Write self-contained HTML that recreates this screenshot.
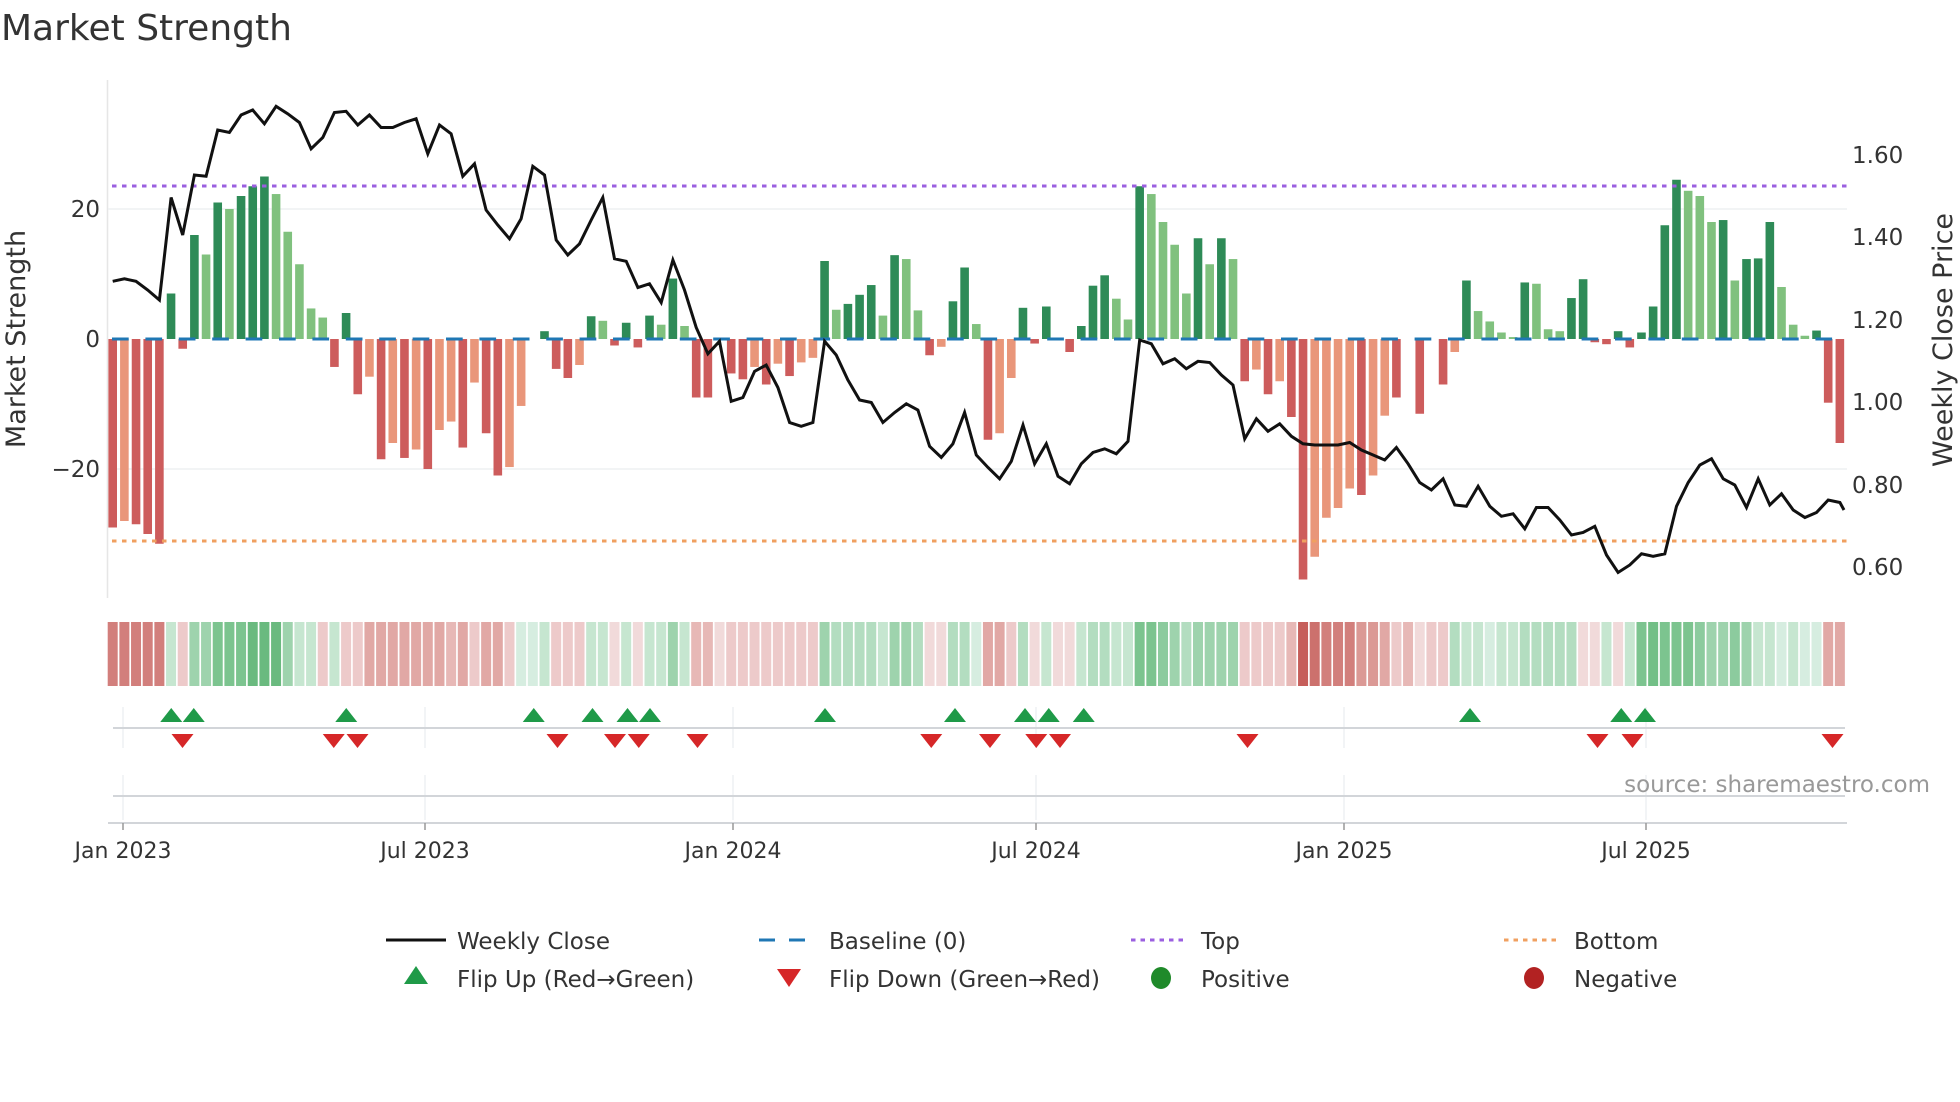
<!DOCTYPE html>
<html><head><meta charset="utf-8"><style>
html,body{margin:0;padding:0;background:#fff;}
svg{display:block;font-family:"DejaVu Sans","Liberation Sans",sans-serif;}
</style></head><body>
<svg id="s" width="1960" height="1102" viewBox="0 0 1960 1102" xmlns="http://www.w3.org/2000/svg">
<rect width="1960" height="1102" fill="#fff"/>
<text x="1" y="40" font-size="36" fill="#333">Market Strength</text>
<line x1="107.5" y1="80" x2="107.5" y2="598" stroke="#e6e6e6" stroke-width="1.5"/>
<line x1="108" y1="209" x2="1847" y2="209" stroke="#eef0f2" stroke-width="1.5"/>
<line x1="108" y1="469" x2="1847" y2="469" stroke="#eef0f2" stroke-width="1.5"/>
<g id="bars"></g>
<line x1="108" y1="339" x2="1847" y2="339" stroke="#1f77b4" stroke-width="3" stroke-dasharray="16.7 16.7" stroke-dashoffset="-4"/>
<line x1="112" y1="186" x2="1847" y2="186" stroke="#9b5fe0" stroke-width="3" stroke-dasharray="4.5 5.5"/>
<line x1="112" y1="541" x2="1847" y2="541" stroke="#f0a060" stroke-width="3" stroke-dasharray="4.5 5.5"/>
<polyline id="price" fill="none" stroke="#111" stroke-width="3" stroke-linejoin="miter"/>
<g font-size="23" fill="#333" text-anchor="end">
<text x="100" y="217">20</text><text x="100" y="347">0</text><text x="100" y="477">−20</text>
</g>
<g font-size="23" fill="#333">
<text x="1852" y="163">1.60</text><text x="1852" y="245">1.40</text><text x="1852" y="328">1.20</text>
<text x="1852" y="410">1.00</text><text x="1852" y="493">0.80</text><text x="1852" y="575">0.60</text>
</g>
<text transform="translate(25,339) rotate(-90)" font-size="27" fill="#333" text-anchor="middle">Market Strength</text>
<text transform="translate(1952,340) rotate(-90)" font-size="27" fill="#333" text-anchor="middle">Weekly Close Price</text>
<g id="heat"></g>
<g id="grid" stroke="#eef0f2" stroke-width="1.5"></g>
<line x1="113" y1="728" x2="1845" y2="728" stroke="#d2d5d9" stroke-width="2"/>
<line x1="113" y1="796" x2="1845" y2="796" stroke="#d2d5d9" stroke-width="2"/>
<line x1="108" y1="823" x2="1847" y2="823" stroke="#d2d5d9" stroke-width="2"/>
<g id="marks"></g>
<text x="1930" y="792" font-size="23" fill="#999" text-anchor="end">source: sharemaestro.com</text>
<g id="ticks" stroke="#999" stroke-width="1.5"></g>
<g font-size="22" fill="#333" text-anchor="middle">
<text x="123" y="858">Jan 2023</text><text x="425" y="858">Jul 2023</text><text x="733" y="858">Jan 2024</text>
<text x="1036" y="858">Jul 2024</text><text x="1344" y="858">Jan 2025</text><text x="1646" y="858">Jul 2025</text>
</g>
<g font-size="23" fill="#333">
<line x1="386" y1="940" x2="446" y2="940" stroke="#111" stroke-width="3"/>
<text x="457" y="949">Weekly Close</text>
<line x1="759" y1="940" x2="814" y2="940" stroke="#1f77b4" stroke-width="3" stroke-dasharray="16 14"/>
<text x="829" y="949">Baseline (0)</text>
<line x1="1131" y1="940" x2="1186" y2="940" stroke="#9b5fe0" stroke-width="3" stroke-dasharray="4.5 5"/>
<text x="1201" y="949">Top</text>
<line x1="1504" y1="940" x2="1559" y2="940" stroke="#f0a060" stroke-width="3" stroke-dasharray="4.5 5"/>
<text x="1574" y="949">Bottom</text>
<polygon points="404,984 416,966 428,984" fill="#1f9a48"/>
<text x="457" y="987">Flip Up (Red→Green)</text>
<polygon points="777,969 801,969 789,987" fill="#d62728"/>
<text x="829" y="987">Flip Down (Green→Red)</text>
<ellipse cx="1161" cy="978" rx="10" ry="11" fill="#1f8a2a"/>
<text x="1201" y="987">Positive</text>
<ellipse cx="1534" cy="978" rx="10" ry="11" fill="#b22222"/>
<text x="1574" y="987">Negative</text>
</g>
</svg>
<script>
var NS="http://www.w3.org/2000/svg";
function el(t,a,p){var e=document.createElementNS(NS,t);for(var k in a)e.setAttribute(k,a[k]);p.appendChild(e);return e;}
var B=[[-29,1],[-28,0],[-28.5,1],[-30,1],[-31.5,1],[7,1],[-1.5,1],[16,1],[13,0],[21,1],[20,0],[22,1],[23.5,1],[25,1],[22.3,0],[16.5,0],[11.5,0],[4.7,0],[3.3,0],[-4.3,1],[4,1],[-8.5,1],[-5.8,0],[-18.5,1],[-16,0],[-18.3,1],[-17,0],[-20,1],[-14,0],[-12.7,0],[-16.7,1],[-6.7,0],[-14.5,1],[-21,1],[-19.7,0],[-10.3,0],[0,0],[1.2,1],[-4.6,1],[-6,1],[-4,0],[3.5,1],[2.8,0],[-1,1],[2.5,1],[-1.3,1],[3.6,1],[2.2,0],[9.3,1],[2,0],[-9,1],[-9,1],[0,0],[-5.3,1],[-6.2,1],[-4.3,0],[-7,1],[-3.8,0],[-5.7,1],[-3.6,0],[-2.9,0],[12,1],[4.5,0],[5.4,1],[6.8,1],[8.3,1],[3.6,0],[12.9,1],[12.3,0],[4.4,0],[-2.5,1],[-1.2,0],[5.8,1],[11,1],[2.3,0],[-15.5,1],[-14.5,0],[-6,0],[4.8,1],[-0.7,1],[5,1],[0,0],[-2,1],[2,1],[8.2,1],[9.8,1],[6.2,0],[3,0],[23.5,1],[22.3,0],[18,0],[14.5,0],[7,0],[15.5,1],[11.5,0],[15.5,1],[12.3,0],[-6.5,1],[-4.7,0],[-8.5,1],[-6.5,0],[-12,1],[-37,1],[-33.5,0],[-27.5,0],[-26,0],[-23,0],[-24,1],[-21,0],[-11.8,0],[-9,1],[0,0],[-11.5,1],[0,0],[-7,1],[-2,0],[9,1],[4.3,0],[2.7,0],[1,0],[0.3,0],[8.7,1],[8.5,0],[1.5,0],[1.2,0],[6.3,1],[9.2,1],[-0.5,1],[-0.8,1],[1.2,1],[-1.3,1],[1,1],[5,1],[17.5,1],[24.5,1],[22.8,0],[22,0],[18,0],[18.3,1],[9,0],[12.3,1],[12.4,1],[18,1],[8,0],[2.2,0],[0.5,0],[1.3,1],[-9.8,1],[-16,1]];
var bars=document.getElementById("bars");
function X(i){return 112.7+11.67*i;}
B.forEach(function(b,i){var v=b[0];if(Math.abs(v)<0.05)return;var h=Math.abs(v)*6.5;var y=v>0?339-h:339;
var c=v>0?(b[1]?"#2e8b57":"#80c17e"):(b[1]?"#cd5c5c":"#e9967a");
el("rect",{x:X(i)-4.3,y:y,width:8.6,height:h,fill:c},bars);});
var P=[225,223,225,232,240,158,188,140,141,104,106,92,88,99,85,91,98,119,110,90,89,100,92,102,102,98,95,123,100,107,141,131,168,180,191,175,133,140,192,204,195,176,158,207,209,230,227,242,208,232,262,283,273,321,318,297,292,310,338,341,338,273,284,304,320,322,338,330,323,328,357,366,355,330,364,374,383,369,340,371,355,381,387,371,362,359,363,353,272,275,291,287,295,289,290,300,308,351,335,345,339,349,355,356,356,356,354,360,364,368,358,371,386,392,383,404,405,389,405,413,411,423,406,406,416,428,426,421,444,458,452,443,445,443,405,386,372,367,383,388,406,383,404,395,408,414,410,400,402];
var pts=P.map(function(y,i){return X(i).toFixed(1)+","+(y*1.25).toFixed(1);});
pts.push("1844,"+(408*1.25));
document.getElementById("price").setAttribute("points",pts.join(" "));
var H=[-3,-3,-3,-3,-3,1,-1,2,2,3,3,3,4,4,4,2,1,1,-1,1,-1,-1,-2,-2,-2,-2,-2,-2,-2,-1.5,-2,-1,-2,-2,-1,0.5,0.5,1,-1,-1,-1,1,1,-0.5,1,-0.5,1,1,2,1,-1.5,-1.5,-0.5,-1,-1,-1,-1,-1,-1,-1,-1,2,1.5,1.5,1.5,1.5,1,2,2,1.5,-0.5,-0.5,1.5,1.5,0.5,-2,-2,-1,1.5,-0.5,1,-0.5,-0.5,1,1.5,1.5,1,1,3,3,2.5,2,1.5,2,2,2,2,-1,-1,-1,-1,-1.5,-4,-3.5,-3,-3,-3,-2.5,-2.5,-2,-1,-1.5,-0.5,-1,-1,1.5,1,1,0.5,1,1,1.5,1.5,1.5,1.5,1.5,-0.5,-0.5,1,-0.5,1,3,3.5,3,3,3,2.5,2,2,2.5,2,1,1,0.5,1,0.5,0.5,-2,-2];
var G={0.5:"#d6ede0",1:"#c6e6d0",1.5:"#b3ddc0",2:"#9ed3ad",2.5:"#8ccb9e",3:"#7cc48f",3.5:"#72bf86",4:"#6aba7f"};
var R={0.5:"#f1dada",1:"#edcaca",1.5:"#e7b8b6",2:"#e1a8a5",2.5:"#db9995",3:"#d27f7c",3.5:"#cc716d",4:"#c65e5a"};
var heat=document.getElementById("heat");
H.forEach(function(v,i){var c=v>0?G[v]:R[-v];el("rect",{x:X(i)-5,y:622,width:10,height:64,fill:c},heat);});
var T=[123,425,733,1036,1344,1646],g=document.getElementById("grid"),tk=document.getElementById("ticks");
T.forEach(function(x){el("line",{x1:x,y1:707,x2:x,y2:748},g);el("line",{x1:x,y1:775,x2:x,y2:820},g);el("line",{x1:x,y1:823,x2:x,y2:830},tk);});
var mk=document.getElementById("marks");
[137,155,277,427,474,502,520,660,764,820,839,867,1176,1297,1316].forEach(function(d){var x=d*1.25;
el("polygon",{points:(x-11)+",722 "+x+",708 "+(x+11)+",722",fill:"#1f9a48"},mk);});
[146,267,286,446,492,511,558,745,792,829,848,998,1278,1306,1466].forEach(function(d){var x=d*1.25;
el("polygon",{points:(x-11)+",734 "+(x+11)+",734 "+x+",748",fill:"#d62728"},mk);});
</script>
</body></html>
